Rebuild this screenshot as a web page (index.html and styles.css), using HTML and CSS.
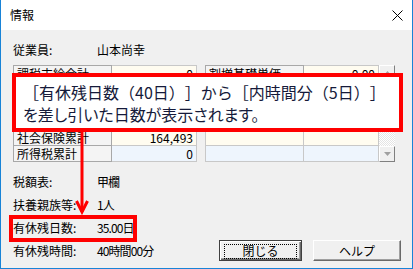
FILE: index.html
```html
<!DOCTYPE html>
<html lang="ja">
<head>
    <meta charset="UTF-8">
    <title>情報</title>
    <link rel="stylesheet" href="styles.css">
</head>
<body>
    <div class="window">
        <div class="titlebar">
            <span class="title">情報</span>
            <svg class="close" width="11" height="11" viewBox="0 0 11 11">
                <path d="M0.5 0.5 L10.5 10.5 M10.5 0.5 L0.5 10.5" stroke="#000" stroke-width="1"/>
            </svg>
        </div>

        <div class="content">
            <div class="field head">
                <span class="label">従業員:</span>
                <span>山本尚幸</span>
            </div>

            <div class="grids">
                <table class="grid grid-left">
                    <colgroup><col class="c-name"><col class="c-num"></colgroup>
                    <tr class="odd"><td class="name">課税支給合計</td><td class="num">0</td></tr>
                    <tr class="even"><td class="name"></td><td class="num"></td></tr>
                    <tr class="odd"><td class="name"></td><td class="num"></td></tr>
                    <tr class="even"><td class="name"></td><td class="num"></td></tr>
                    <tr class="odd"><td class="name">社会保険累計</td><td class="num">164,493</td></tr>
                    <tr class="even"><td class="name">所得税累計</td><td class="num">0</td></tr>
                </table>

                <div class="grid-wrap">
                    <table class="grid grid-right">
                        <colgroup><col class="c-name"><col class="c-num2"></colgroup>
                        <tr class="odd"><td class="name">割増基礎単価</td><td class="num">0.00</td></tr>
                        <tr class="even"><td class="name"></td><td class="num"></td></tr>
                        <tr class="odd"><td class="name"></td><td class="num"></td></tr>
                        <tr class="even"><td class="name"></td><td class="num"></td></tr>
                        <tr class="odd fill"><td></td><td></td></tr>
                        <tr class="even fill"><td></td><td></td></tr>
                    </table>
                    <div class="scrollbar">
                        <div class="sb-btn">
                            <svg width="7" height="4" viewBox="0 0 7 4"><path d="M0 4 L3.5 0 L7 4 Z" fill="#a0a0a0"/></svg>
                        </div>
                        <div class="sb-track"></div>
                        <div class="sb-btn">
                            <svg width="7" height="4" viewBox="0 0 7 4"><path d="M0 0 L7 0 L3.5 4 Z" fill="#a0a0a0"/></svg>
                        </div>
                    </div>
                </div>
            </div>

            <div class="bottom">
                <div class="info">
                    <div class="field"><span class="label">税額表:</span><span class="value">甲欄</span></div>
                    <div class="field"><span class="label">扶養親族等:</span><span class="value">1人</span></div>
                    <div class="field"><span class="label">有休残日数:</span><span class="value">35.00日</span></div>
                    <div class="field"><span class="label">有休残時間:</span><span class="value">40時間00分</span></div>
                </div>
                <div class="buttons">
                    <button class="btn btn-default"><span class="focus">閉じる</span></button>
                    <button class="btn btn-help">ヘルプ</button>
                </div>
            </div>
        </div>

        <!-- annotation overlays -->
        <div class="callout">
            <div>［有休残日数（40日）］から［内時間分（5日）］</div>
            <div class="prop">を差し引いた日数が表示されます。</div>
        </div>
        <svg class="arrow" width="14" height="84" viewBox="0 0 14 84">
            <path d="M7 0 L7 80" stroke="#ff0000" stroke-width="3"/>
            <path d="M1.5 69 L7 80 L12.5 69" stroke="#ff0000" stroke-width="3" fill="none"/>
        </svg>
        <div class="mark"></div>
    </div>
</body>
</html>
```

FILE: styles.css
```css
body {
    margin: 0;
    font-family: "Noto Sans CJK JP", "Noto Sans", sans-serif;
    font-size: 12px;
    color: #000;
    background: #fff;
}
.window {
    position: relative;
    width: 413px;
    height: 269px;
    box-sizing: border-box;
    border: 1px solid #1883d7;
    border-top: none;
    background: #f0f0f0;
    overflow: hidden;
}
.titlebar {
    height: 30px;
    background: #fff;
    display: flex;
    align-items: center;
    justify-content: space-between;
    padding: 0 9px 0 9px;
}
.title {
    font-size: 12px;
    line-height: 16px;
}
.content {
    padding: 0 11px 0 12px;
}
.field {
    display: flex;
    align-items: center;
    height: 23px;
    line-height: 16px;
}
.field.head {
    height: 16px;
    margin-top: 12px;
}
.label {
    width: 84px;
}
.value {
    letter-spacing: -0.9px;
}
.grids {
    display: flex;
    gap: 8px;
    margin-top: 7px;
}
.grid {
    border-collapse: collapse;
    table-layout: fixed;
    background: #fff;
}
.grid td {
    height: 15px;
    padding: 0 3px;
    border: 1px solid #c8c8c8;
    line-height: 15px;
    white-space: nowrap;
    overflow: hidden;
}
.grid td.name {
    background: #f4f4f4;
    border-color: #a8a8a8;
}
.grid td.num {
    text-align: right;
}
.c-name {
    width: 98px;
}
.c-num {
    width: 85px;
}
.c-num2 {
    width: 75px;
}
.grid tr.odd td.num,
.grid tr.fill.odd td {
    background: #fffcf0;
}
.grid tr.even td.num,
.grid tr.fill.even td {
    background: #eef5fd;
}
.grid tr.fill td {
    border-color: #c8c8c8;
}
.grid-wrap {
    display: flex;
}
.scrollbar {
    width: 16px;
    display: flex;
    flex-direction: column;
}
.sb-btn {
    height: 16px;
    box-sizing: border-box;
    background: #f0f0f0;
    border: 1px solid;
    border-color: #fff #808080 #808080 #fff;
    display: flex;
    align-items: center;
    justify-content: center;
}
.sb-track {
    flex: 1;
    background: repeating-conic-gradient(#fff 0 25%, #e4e4e4 0 50%) 0 0 / 2px 2px;
}
.bottom {
    display: flex;
    justify-content: space-between;
    align-items: flex-end;
    margin-top: 8px;
}
.buttons {
    display: flex;
    gap: 11px;
}
.btn {
    height: 21px;
    box-sizing: border-box;
    font-family: inherit;
    font-size: 12px;
    line-height: 15px;
    background: #f0f0f0;
    border: 1px solid;
    border-color: #fff #696969 #696969 #fff;
    box-shadow: inset -1px -1px 0 #a0a0a0;
    padding: 0;
    color: #000;
    margin-bottom: 1px;
}
.btn-default {
    width: 83px;
    border: 1px solid #404040;
    box-shadow: inset 1px 1px 0 #fff, inset -1px -1px 0 #696969, inset -2px -2px 0 #a0a0a0;
    padding: 3px 4px;
}
.btn-default .focus {
    display: block;
    height: 13px;
    line-height: 12px;
    border: 1px dotted #000;
}
.btn-help {
    width: 88px;
}
.callout {
    position: absolute;
    left: 11px;
    top: 73px;
    width: 391px;
    box-sizing: border-box;
    border: 4px solid #ff0000;
    background: #fff;
    padding: 4px 0 3px 7px;
    font-size: 16px;
    line-height: 22px;
    color: #151a3a;
    white-space: nowrap;
    text-spacing-trim: space-all;
}
.callout .prop {
    font-feature-settings: "palt";
}
.arrow {
    position: absolute;
    left: 74px;
    top: 132px;
}
.mark {
    position: absolute;
    left: 8px;
    top: 215px;
    width: 128px;
    height: 27px;
    box-sizing: border-box;
    border: 4px solid #ff0000;
}
```
